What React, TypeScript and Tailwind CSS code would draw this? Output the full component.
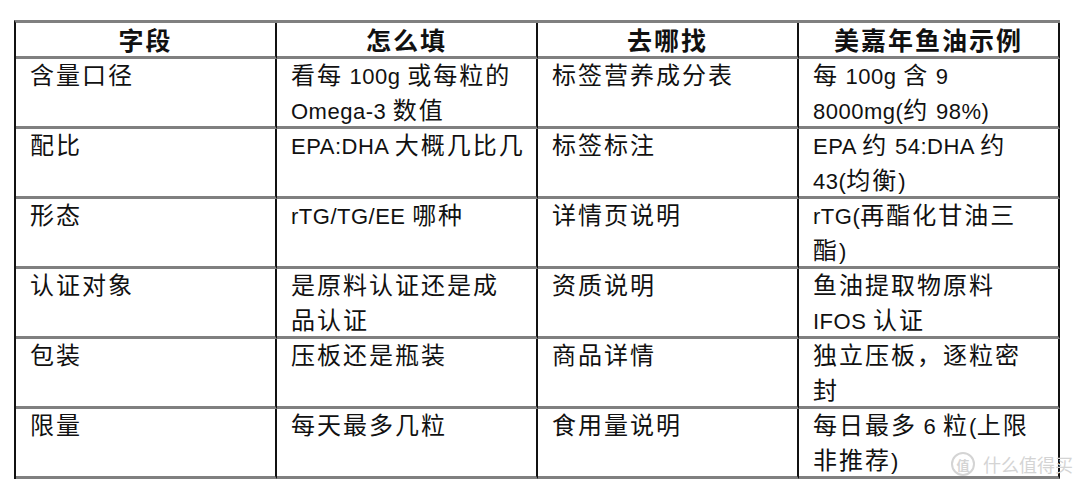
import React from "react";

const header = ["字段", "怎么填", "去哪找", "美嘉年鱼油示例"];

const rows: string[][][] = [
  [["含量口径"], ["看每 100g 或每粒的", "Omega-3 数值"], ["标签营养成分表"], ["每 100g 含 9", "8000mg(约 98%)"]],
  [["配比"], ["EPA:DHA 大概几比几"], ["标签标注"], ["EPA 约 54:DHA 约", "43(均衡)"]],
  [["形态"], ["rTG/TG/EE 哪种"], ["详情页说明"], ["rTG(再酯化甘油三", "酯)"]],
  [["认证对象"], ["是原料认证还是成", "品认证"], ["资质说明"], ["鱼油提取物原料", "IFOS 认证"]],
  [["包装"], ["压板还是瓶装"], ["商品详情"], ["独立压板，逐粒密", "封"]],
  [["限量"], ["每天最多几粒"], ["食用量说明"], ["每日最多 6 粒(上限", "非推荐)"]],
];

const font = "font-['Noto_Sans_CJK_SC',sans-serif]";

// latin runs are narrower in the original (half-width glyphs)
function Line({ text }: { text: string }) {
  const parts = text.match(/[\x20-\x7e]+|[^\x20-\x7e]+/g) ?? [];
  return (
    <div className="h-[35px]">
      {parts.map((p, i) =>
        /^[\x20-\x7e]+$/.test(p) ? (
          <span key={i} className="font-['Liberation_Sans',sans-serif] text-[22px] leading-none tracking-[0.5px]">
            {p}
          </span>
        ) : (
          <span key={i}>{p}</span>
        ),
      )}
    </div>
  );
}

export default function App() {
  return (
    <div className={`relative w-[1080px] h-[487px] bg-white pt-[20px] pl-[14px] ${font}`}>
      <div className="grid w-[1046px] grid-cols-[repeat(4,261px)] border-l-2 border-t-[3px] border-l-[#111] border-t-[#808080]">
        {header.map(h => (
          <div
            key={h}
            className="h-[36px] border-r-2 border-b-[3px] border-r-[#111] border-b-[#808080] text-center text-[25px] font-bold leading-[33px] tracking-[2px] text-[#111]"
          >
            {h}
          </div>
        ))}
        {rows.map((row, ri) =>
          row.map((cell, ci) => (
            <div
              key={`${ri}-${ci}`}
              className="h-[70px] border-r-2 border-b-[3px] border-r-[#111] border-b-[#808080] pl-[14px] text-[24px] leading-[35px] tracking-[2px] text-[#111] whitespace-nowrap"
            >
              <div className="relative -top-[3px]">
                {cell.map(line => (
                  <Line key={line} text={line} />
                ))}
              </div>
            </div>
          )),
        )}
      </div>

      <div className="absolute left-[951px] top-[452px] flex items-center gap-[8px] text-[#d4d4d4]">
        <span className="flex h-[24px] w-[24px] items-center justify-center rounded-full border-2 border-[#d4d4d4] text-[13px] font-bold leading-none">
          值
        </span>
        <span className="text-[18px] leading-none">什么值得买</span>
      </div>
    </div>
  );
}
